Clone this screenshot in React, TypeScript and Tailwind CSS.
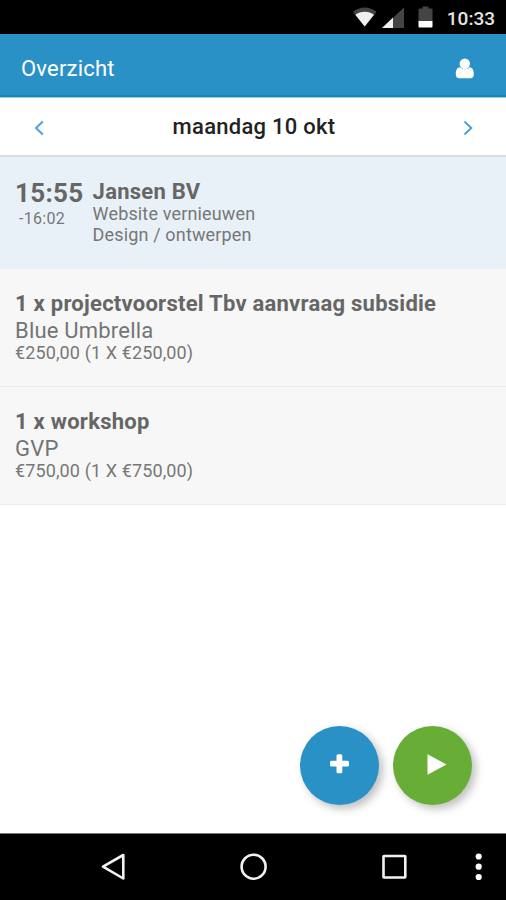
import React from 'react';

function StatusBar() {
  return (
    <div className="flex h-[34px] shrink-0 items-center justify-end bg-black pr-[11px]">
      <svg className="mr-[13px] h-[34px] w-[52px]" viewBox="0 0 52 34">
        <path d="M0 12C6.500 6 17 6 23.500 12L11.700 26.500Z" fill="#444" />
        <path d="M2.300 14.800C7.500 10.800 16 10.800 21 14.800L11.700 26.500Z" fill="#f0f0f0" />
        <path d="M29 28L51 7.500V28Z" fill="#444" />
        <path d="M29 28L40 17.500V28Z" fill="#f0f0f0" />
      </svg>
      <svg className="mr-[14px] h-[34px] w-[15px]" viewBox="0 0 15 34">
        <path d="M0.500 9.500Q0.500 8.500 1.500 8.500H4.500V6.500H10.500V8.500H13.500Q14.500 8.500 14.500 9.500V21H0.500Z" fill="#444" />
        <path d="M0.500 21H14.500V26.500Q14.500 27.500 13.500 27.500H1.500Q0.500 27.500 0.500 26.500Z" fill="#fff" />
      </svg>
      <span className="mt-[2px] text-[19px] font-medium leading-none text-[#e6e6e6]">10:33</span>
    </div>
  );
}

function Header() {
  return (
    <header className="flex h-[64px] shrink-0 items-center justify-between border-b border-[#9ccbe0] bg-[#2a91c7] pl-[21px] pr-[31px] text-white shadow-[inset_0_-2px_0_#1b86b4]">
      <h1 className="mt-[7px] text-[22px] leading-none tracking-[0.2px]">Overzicht</h1>
      <svg className="mt-[5px] h-[21px] w-[20px]" viewBox="0 0 20 21">
        <path d="M5 9.300C1.800 9.500 0.800 12.500 0.800 16.200C0.800 18.800 2 20.300 4.200 20.300H15.300C17.500 20.300 18.800 18.800 18.800 16.200C18.800 12.500 17.700 9.500 14.700 9.300C12.500 11.800 7.200 11.800 5 9.300Z" fill="#fff" />
        <circle cx="9.800" cy="5.700" r="5.200" fill="#fff" />
      </svg>
    </header>
  );
}

function DateNav() {
  return (
    <div className="flex h-[59px] shrink-0 items-center justify-between border-b-2 border-[#d8dce4] bg-white pl-[33px] pr-[31px]">
      <svg className="mt-[3px] h-[16px] w-[12px]" viewBox="0 0 12 16" fill="none" stroke="#4a9fd8" strokeWidth="1.900">
        <path d="M9.800 1.500L3 8L9.800 14.500" />
      </svg>
      <span className="text-[22px] font-medium leading-none tracking-[0.27px] text-[#222]">maandag 10 okt</span>
      <svg className="mt-[3px] h-[16px] w-[12px]" viewBox="0 0 12 16" fill="none" stroke="#4a9fd8" strokeWidth="1.900">
        <path d="M1.500 1.500L8.300 8L1.500 14.500" />
      </svg>
    </div>
  );
}

function TimeEntry() {
  return (
    <li className="flex h-[112px] bg-[#e9f1f8] pl-[15px] pt-[22px] text-[#666]">
      <div className="w-[77.6px]">
        <p className="text-[26px] font-bold leading-[29px] tracking-[0.3px]">15:55</p>
        <p className="pl-[4px] text-[16px] leading-[22px] tracking-[0.3px] text-[#777]">-16:02</p>
      </div>
      <div>
        <p className="pt-px text-[22px] font-bold leading-[23px] tracking-[0.25px]">Jansen BV</p>
        <p className="text-[18px] leading-[21px] tracking-[0.15px] text-[#777]">Website vernieuwen</p>
        <p className="text-[18px] leading-[21px] tracking-[0.15px] text-[#777]">Design / ontwerpen</p>
      </div>
    </li>
  );
}

function ProductEntry({ title, client, amount }: { title: string; client: string; amount: string }) {
  return (
    <li className="h-[118px] border-b border-[#ebebeb] bg-[#f7f7f7] pl-[15px] pt-[22px] text-[#666]">
      <p className="text-[22px] font-bold leading-[26px] tracking-[0.25px]">{title}</p>
      <p className="pt-px text-[22px] leading-[26px] tracking-[0.2px] text-[#747474]">{client}</p>
      <p className="text-[18px] leading-[18px] tracking-[0.12px] text-[#777]">{amount}</p>
    </li>
  );
}

function SystemNav() {
  return (
    <nav className="h-[67px] shrink-0 border-t border-[#777] bg-black">
      <svg className="h-[66px] w-full" viewBox="0 834 506 66" fill="none" stroke="#f2f2f2" strokeWidth="2.600">
        <path d="M123.300 855V878.500L103 866.700Z" strokeLinejoin="round" />
        <circle cx="253.600" cy="866.700" r="12" />
        <rect x="383.500" y="856" width="21.800" height="21.500" rx="0.500" />
        <g fill="#fff" stroke="none">
          <circle cx="478.700" cy="856.500" r="3.100" />
          <circle cx="478.700" cy="866.700" r="3.100" />
          <circle cx="478.700" cy="877" r="3.100" />
        </g>
      </svg>
    </nav>
  );
}

export default function App() {
  return (
    <div className="flex h-[900px] w-[506px] flex-col overflow-hidden bg-white font-['Roboto',sans-serif]">
      <StatusBar />
      <Header />
      <DateNav />
      <main className="flex flex-1 flex-col justify-between">
        <ul>
          <TimeEntry />
          <ProductEntry title="1 x projectvoorstel Tbv aanvraag subsidie" client="Blue Umbrella" amount="€250,00 (1 X €250,00)" />
          <ProductEntry title="1 x workshop" client="GVP" amount="€750,00 (1 X €750,00)" />
        </ul>
        <div className="flex justify-end gap-[14px] pb-[28px] pr-[34px]">
          <button className="h-[79px] w-[79px] rounded-full bg-[#2a91c7] shadow-[4px_4px_8px_rgba(0,0,0,0.25)]">
            <svg className="h-full w-full" viewBox="0 0 79 79" fill="#fff">
              <rect x="30" y="34.700" width="19" height="5.800" rx="1.500" />
              <rect x="36.500" y="28.300" width="5.800" height="19" rx="1.500" />
            </svg>
          </button>
          <button className="h-[79px] w-[79px] rounded-full bg-[#68ad35] shadow-[4px_4px_8px_rgba(0,0,0,0.25)]">
            <svg className="h-full w-full" viewBox="0 0 79 79" fill="#fff">
              <path d="M34.500 28.300L53.500 38.500L34.500 48.700Z" />
            </svg>
          </button>
        </div>
      </main>
      <SystemNav />
    </div>
  );
}
